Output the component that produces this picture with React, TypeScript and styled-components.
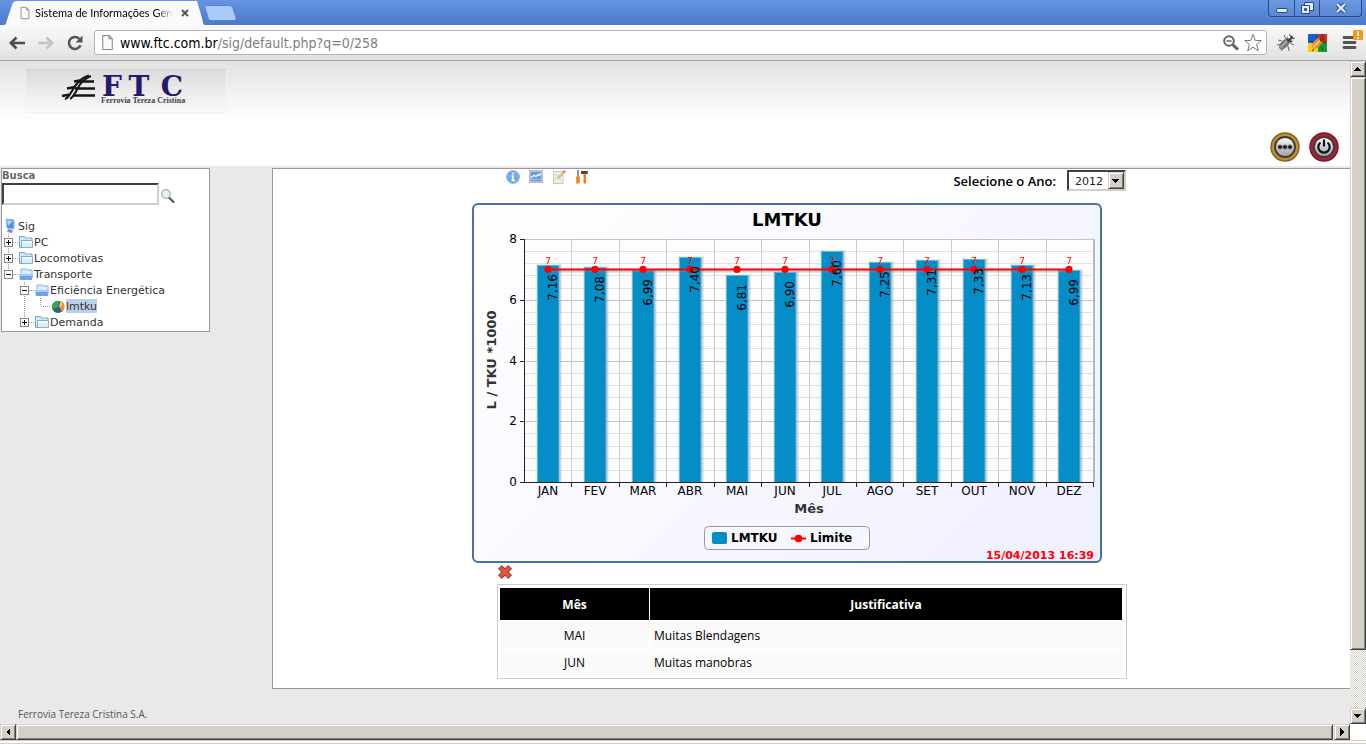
import React from "react";
import styled, { createGlobalStyle, css } from "styled-components";

const verdana = `Verdana, "DejaVu Sans", sans-serif`;
const tahoma = `Tahoma, "DejaVu Sans Condensed", sans-serif`;
const trebuchet = `"Trebuchet MS", "Open Sans", sans-serif`;

const GlobalStyle = createGlobalStyle`
  * { box-sizing: border-box; }
  body { margin: 0; background: #fff; font-family: ${verdana}; overflow: hidden; }
  button { padding: 0; border: 0; background: none; font: inherit; cursor: pointer; }
  svg { display: block; }
`;

/* ---------- browser window ---------- */

const Window = styled.div`
  display: flex;
  flex-direction: column;
  height: 100vh;
  min-width: 1100px;
`;

const TitleBar = styled.div`
  display: flex;
  flex: none;
  height: 25px;
  padding-left: 3px;
  background: linear-gradient(#6594e0, #4b7acc);
`;

const Tab = styled.div`
  display: flex;
  align-items: center;
  width: 179px;
  height: 24px;
  margin-top: 1px;
  padding: 0 8px 0 0;
  background: #fafafa;
  font: 11px/16px Lato, sans-serif;
  color: #000;
`;

const TabTitle = styled.span`
  flex: 1;
  margin: 0 8px 0 3px;
  overflow: hidden;
  white-space: nowrap;
  mask-image: linear-gradient(to right, #000 88%, transparent);
`;

const NewTab = styled.button`
  margin-top: 5px;
  height: 16px;
`;

const WindowButtons = styled.div`
  display: flex;
  height: 17px;
  margin: 0 4px 0 auto;
  border: 1px solid #264a8c;
  border-top: 0;
  border-radius: 0 0 4px 4px;
  background: linear-gradient(#6d9ae2, #5b87d4);
`;

const WindowButton = styled.button<{ $width: number }>`
  display: grid;
  place-items: center;
  width: ${(p) => p.$width}px;
  & + & { border-left: 1px solid #264a8c; }
`;

const Toolbar = styled.div`
  display: flex;
  flex: none;
  align-items: center;
  height: 36px;
  padding: 0 3px 0 8px;
  border-bottom: 1px solid #a5a5a5;
  background: linear-gradient(#fafafa, #e1e1e1);
`;

const ToolButton = styled.button<{ $gap?: number }>`
  flex: none;
  margin-right: ${(p) => p.$gap ?? 0}px;
`;

const AddressBar = styled.div`
  display: flex;
  flex: 1;
  align-items: center;
  height: 25px;
  margin-right: 9px;
  padding: 0 3px 0 4px;
  border: 1px solid #b4b4b4;
  border-radius: 3px;
  background: #fff;
`;

const Address = styled.div`
  flex: 1;
  margin-left: 4px;
  font: 14px/18px ${tahoma};
  color: #808080;
  b { color: #000; font-weight: 400; }
`;

const Body = styled.div`
  display: flex;
  flex: 1;
  min-height: 0;
`;

const bevel = css`
  border: 1px solid;
  border-color: #d4d0c8 #404040 #404040 #d4d0c8;
  box-shadow: inset 1px 1px #fff, inset -1px -1px #808080;
  background: #d4d0c8;
`;

const ScrollBar = styled.div<{ $across?: boolean }>`
  display: flex;
  flex: none;
  flex-direction: ${(p) => (p.$across ? "row" : "column")};
  ${(p) => (p.$across ? "height: 16px;" : "width: 16px;")}
  background: repeating-conic-gradient(#d4d0c8 0 25%, #fff 0 50%) 0 0 / 2px 2px;
`;

const ScrollArrow = styled.button`
  ${bevel}
  display: grid;
  flex: none;
  place-items: center;
  width: 16px;
  height: 16px;
`;

const Thumb = styled.div<{ $share: number }>`
  ${bevel}
  flex: ${(p) => p.$share};
`;

const Track = styled.div<{ $share: number }>`
  flex: ${(p) => p.$share};
`;

const Corner = styled.div`
  width: 16px;
  background: #fff;
`;

const BottomRow = styled.div`
  display: flex;
  flex: none;
  ${ScrollBar} { flex: 1; }
`;

const BottomEdge = styled.div`
  flex: none;
  height: 4px;
  border-top: 1px solid #d4d0c8;
  border-bottom: 1px solid #d4d0c8;
  background: #fff;
`;

/* ---------- site ---------- */

const Page = styled.div`
  flex: 1;
  min-width: 0;
  overflow: hidden;
  background: #e9e9e9;
`;

const Header = styled.header`
  display: flex;
  align-items: flex-end;
  justify-content: space-between;
  height: 105px;
  padding: 8px 11px 4px 25px;
  background: linear-gradient(#e3e2e0, #fff 60px);
`;

const LogoBox = styled.a`
  align-self: flex-start;
  width: 202px;
  height: 44px;
  border: 1px solid #f2f2f2;
  border-top-color: #cfcfcf;
  background: linear-gradient(#dcdcdc, #fafafa);
`;

const HeaderButtons = styled.div`
  display: flex;
  gap: 9px;
`;

const Columns = styled.div`
  display: flex;
  align-items: flex-start;
  padding-top: 2px;
`;

const Sidebar = styled.aside`
  flex: none;
  width: 209px;
  margin: 0 62px 0 1px;
  border: 1px solid #999;
  background: #fff;
`;

const SearchLabel = styled.label`
  display: block;
  font: bold 10px/14px ${verdana};
  color: #666;
`;

const SearchRow = styled.div`
  display: flex;
  align-items: center;
  gap: 1px;
  margin-bottom: 13px;
`;

const SearchInput = styled.input`
  width: 157px;
  height: 22px;
  border: 2px solid;
  border-color: #404040 #d4d0c8 #d4d0c8 #404040;
  background: #fff;
  outline: 0;
`;

const Tree = styled.ul`
  margin: 0;
  padding: 0 0 1px;
  list-style: none;
`;

const TreeRow = styled.li`
  display: flex;
  height: 16px;
  font: 11px/16px ${verdana};
`;

const TreeCell = styled.span`
  flex: none;
  width: 16px;
  height: 16px;
`;

const TreeLink = styled.a<{ $selected?: boolean }>`
  height: 14px;
  margin-top: 1px;
  line-height: 16px;
  color: #333;
  text-decoration: none;
  white-space: nowrap;
  ${(p) => p.$selected && "background: #bcd0ec;"}
`;

const Main = styled.main`
  flex: 1;
  min-width: 0;
  margin-right: -2px;
  padding-bottom: 9px;
  border: 1px solid #999;
  background: #fff;
`;

const Report = styled.div`
  width: 630px;
  margin: 0 auto;
`;

const ReportBar = styled.div`
  display: flex;
  align-items: flex-start;
  height: 34px;
  padding-left: 8px;
`;

const Tools = styled.div`
  display: flex;
  gap: 7px;
`;

const YearField = styled.div`
  display: flex;
  align-items: center;
  gap: 11px;
  margin: 1px 1px 0 auto;
  font: 600 13px/20px ${trebuchet};
  color: #000;
`;

const SelectBox = styled.span`
  display: flex;
  width: 59px;
  height: 21px;
  border: 2px solid;
  border-color: #404040 #d4d0c8 #d4d0c8 #404040;
  background: #fff;
`;

const Select = styled.select`
  flex: 1;
  min-width: 0;
  padding: 2px 0 0 6px;
  border: 0;
  background: #fff;
  color: #222;
  font: 11px/15px ${verdana};
  appearance: none;
  outline: 0;
`;

const SelectArrow = styled.span`
  ${bevel}
  display: grid;
  place-items: center;
  width: 16px;
`;

const ChartFrame = styled.figure`
  width: 630px;
  height: 360px;
  margin: 0 0 0 -25px;
  border: 2px solid #4572a7;
  border-radius: 6px;
  background: linear-gradient(135deg, #fff, #f0f0ff);
`;

const CloseRow = styled.div`
  height: 21px;
  padding: 1px 0 0 1px;
`;

const TableFrame = styled.div`
  padding: 2px 3px 2px 1px;
  border: 1px solid #ccc;
`;

const Table = styled.table`
  width: 100%;
  border-spacing: 1px;
  table-layout: fixed;
  font: 12px/20px ${trebuchet};
  color: #000;
`;

const HeadCell = styled.th<{ $width?: number }>`
  ${(p) => p.$width && `width: ${p.$width}px;`}
  height: 33px;
  padding: 1px 0 0;
  border-bottom: 1px solid #fff;
  background: #000;
  color: #fff;
`;

const Cell = styled.td<{ $center?: boolean }>`
  height: 26px;
  padding: 2px 4px 0;
  background: #fafafa;
  text-align: ${(p) => (p.$center ? "center" : "left")};
`;

const Footer = styled.footer`
  padding: 17px 18px 0;
  font: 10px/16px ${trebuchet};
  color: #555;
`;

/* ---------- icons ---------- */

const PageIcon = ({ size = 16 }: { size?: number }) => (
  <svg width={size} height={size} viewBox="0 0 16 16" fill="none" stroke="#8c8c8c">
    <path d="M3.500 1.500h6l3 3v10h-9z" fill="#fafafa" />
    <path d="M9.500 1.500v3h3" />
  </svg>
);

const ArrowGlyph = ({ d }: { d: string }) => (
  <svg width="8" height="8" viewBox="0 0 8 8" fill="#000" shapeRendering="crispEdges"><path d={d} /></svg>
);
const UP = "M0 6h7L3.500 2z";
const DOWN = "M0 2h7L3.500 6z";
const LEFT = "M6 0v8L2 4z";
const RIGHT = "M2 0v8l4-4z";

const BackIcon = ({ color, flip }: { color: string; flip?: boolean }) => (
  <svg width="18" height="16" viewBox="0 0 18 16" fill="none" stroke={color} strokeWidth="2.600">
    <path d={flip ? "M1 8h14M9.500 2.500L15.200 8l-5.700 5.500" : "M17 8H3M8.500 2.500L2.800 8l5.700 5.500"} />
  </svg>
);

const ReloadIcon = () => (
  <svg width="18" height="18" viewBox="0 0 18 18">
    <path d="M14.500 11.200A6 6 0 1 1 13.300 4.800" fill="none" stroke="#555" strokeWidth="2.600" />
    <path d="M16.500 1.500v7h-7z" fill="#555" />
  </svg>
);

const ZoomOutIcon = () => (
  <svg width="18" height="18" viewBox="0 0 18 18" fill="none" stroke="#666">
    <circle cx="7" cy="7" r="4.800" strokeWidth="2" />
    <path d="M4.500 7h5" strokeWidth="1.500" />
    <path d="M10.700 10.700l5.300 5" strokeWidth="3" />
  </svg>
);

const StarIcon = () => (
  <svg width="20" height="20" viewBox="0 0 20 20" fill="#fff" stroke="#777" strokeLinejoin="round">
    <path d="M10 1.500l2.300 6h6l-4.700 4 1.700 6.300L10 14.200l-5.300 3.600 1.700-6.300-4.700-4h6z" />
  </svg>
);

const BugIcon = () => (
  <svg width="20" height="20" viewBox="0 0 20 20">
    <path d="M6 8L2 7M7 11L1 12M9 14l-4 4M12 13l1 5M14 10l4 2M10 6L8 2M13 4l1-3M16 6l3-1" stroke="#666" fill="none" />
    <ellipse cx="8.500" cy="11" rx="6.800" ry="3.600" transform="rotate(-45 8.500 11)" fill="#777" />
    <path d="M4.500 14.500L12 7" stroke="#b5b5b5" strokeWidth="1.500" />
    <circle cx="14" cy="6" r="3.400" fill="#444" />
    <circle cx="12.800" cy="4" r="1.500" fill="#fff" />
    <circle cx="16.500" cy="7" r="1.300" fill="#ddd" />
  </svg>
);

const ColorBugIcon = () => (
  <svg width="20" height="20" viewBox="0 0 20 20">
    <path d="M0 1h10v9H0z" fill="#1560d8" />
    <path d="M10 1h9v9h-9z" fill="#d92b1f" />
    <path d="M0 10h10v9H0z" fill="#fbc916" />
    <path d="M10 10h9v9h-9z" fill="#159a3c" />
    <path d="M5 9L2 8M6 16l-2 2M13 14l2 3M15 9l3 1M10 6L8 3M14 4l1-3" stroke="#333" />
    <ellipse cx="9.500" cy="10" rx="7" ry="3.500" transform="rotate(-45 9.500 10)" fill="#f58a24" />
    <path d="M5 14.500L12.500 7" stroke="#ffd9a0" strokeWidth="1.300" />
    <circle cx="14" cy="6" r="2.600" fill="#7d3510" />
  </svg>
);

const MenuIcon = () => (
  <svg width="22" height="26" viewBox="0 0 22 26">
    <path d="M3 7.500h10M3 12.500h11M3 17.500h11" stroke="#555" strokeWidth="2.800" strokeLinecap="round" />
    <rect x="12" y="0" width="10" height="10" rx="1.500" fill="#f39a1d" />
    <path d="M17 1.500v4.500M17 7v2" stroke="#fff" strokeWidth="1.700" />
  </svg>
);

const Logo = () => (
  <svg width="200" height="42" viewBox="0 0 200 42">
    <g stroke="#161616" fill="none">
      <path d="M39 29C46 27 47 10 63 5.500" strokeWidth="2.200" />
      <path d="M44 29C51 25 51 11 65 6" strokeWidth="2" />
      <path d="M53 11.500h15M49 18.500h20M47 25.500h22" strokeWidth="2.400" />
      <path d="M36 26l8-1.500M41 18.500l8-1.500M48 11.500l6-1" strokeWidth="2.400" />
    </g>
    <g fill="#241a6b" fontFamily='"DejaVu Serif", serif' fontWeight="700" fontSize="28" textAnchor="middle">
      <text x="86" y="26">F</text>
      <text x="113" y="26">T</text>
      <text x="146" y="26">C</text>
    </g>
    <text x="75" y="33" fontFamily='"Liberation Serif", serif' fontSize="8" fontWeight="700" fill="#444">Ferrovia Tereza Cristina</text>
  </svg>
);

const RoundIcon = ({ ring, edge, children }: { ring: string; edge: string; children: React.ReactNode }) => (
  <svg width="30" height="30" viewBox="0 0 30 30">
    <defs>
      <linearGradient id={`metal-${edge.slice(1)}`} x1="0" y1="0" x2="0" y2="1">
        <stop offset="0" stopColor="#fff" />
        <stop offset="1" stopColor="#9c9c9c" />
      </linearGradient>
    </defs>
    <circle cx="15" cy="15" r="14" fill={ring} stroke={edge} strokeWidth="1.500" />
    <circle cx="15" cy="15" r="10" fill={`url(#metal-${edge.slice(1)})`} stroke="#3c3c3c" strokeWidth="1.800" />
    {children}
  </svg>
);

const SearchIcon = () => (
  <svg width="16" height="20" viewBox="0 0 16 20">
    <path d="M9 13.500l4.500 4.500" stroke="#555" strokeWidth="2.200" strokeLinecap="round" />
    <circle cx="6" cy="10" r="4.300" fill="#e2f1f1" stroke="#a4b3b3" strokeWidth="1.200" />
  </svg>
);

const ComputerIcon = () => (
  <svg width="16" height="16" viewBox="0 0 16 16">
    <path d="M4 1l8 1v9l-7-1z" fill="#4a8fe8" stroke="#9ab8ea" />
    <path d="M5 2l6 1-5 5z" fill="#9cdcf8" />
    <path d="M6 11l5 1-1 3-5-1z" fill="#8a88c4" />
  </svg>
);

const FolderIcon = ({ open }: { open?: boolean }) =>
  open ? (
    <svg width="16" height="16" viewBox="0 0 16 16">
      <path d="M3 3h5l1 1h5v5H3z" fill="#dceafb" stroke="#8bb0ea" />
      <path d="M1 8h14l-1 6H2z" fill="#6ea2f0" />
      <path d="M1 8h14v2H1z" fill="#a6c8fa" />
    </svg>
  ) : (
    <svg width="16" height="16" viewBox="0 0 16 16">
      <path d="M1.500 13.500v-11h5l1 1.500h6.500v9.500z" fill="#cfe6f5" stroke="#6fabcc" />
      <path d="M3.500 13.500v-7h11v7z" fill="#d9eefa" stroke="#78b4d4" />
      <path d="M4 7h10v2H4z" fill="#f4fbff" />
    </svg>
  );

const PieIcon = () => (
  <svg width="16" height="16" viewBox="0 0 16 16">
    <circle cx="8" cy="9" r="6" fill="#2f5f8f" />
    <path d="M8 9L2.500 11.500A6 6 0 0 1 9.500 3z" fill="#3ea648" />
    <path d="M9 9l2-6a6 6 0 0 1 1 10.500z" fill="#f0913a" />
    <path d="M9 9l2-6 1 4z" fill="#fcd9ae" />
  </svg>
);

const Guide = ({ down, sign }: { down?: boolean; sign?: "+" | "-" }) => (
  <svg width="16" height="16" viewBox="0 0 16 16" fill="none" shapeRendering="crispEdges">
    <path d={`M6.500 0v${down ? 16 : 8}M7 8.500h9`} stroke="#999" strokeDasharray="1 1" />
    {sign && (
      <>
        <rect x="2.500" y="4.500" width="8" height="8" fill="#fff" stroke="#848484" />
        <path d={sign === "+" ? "M4 8.500h5M6.500 6v5" : "M4 8.500h5"} stroke="#000" />
      </>
    )}
  </svg>
);

const Line = () => (
  <svg width="16" height="16" viewBox="0 0 16 16" shapeRendering="crispEdges">
    <path d="M6.500 0v16" stroke="#999" strokeDasharray="1 1" />
  </svg>
);

const InfoIcon = () => (
  <svg width="16" height="16" viewBox="0 0 16 16">
    <circle cx="8" cy="8" r="6.500" fill="#7ba8ea" stroke="#9bbcee" />
    <path d="M8 3.500v2M6.500 7H8v4.500M6.500 11.500h3.500" stroke="#fff" strokeWidth="1.600" fill="none" />
  </svg>
);

const GraphIcon = () => (
  <svg width="16" height="16" viewBox="0 0 16 16">
    <rect x="1" y="1" width="14" height="13" fill="#b4bfcf" />
    <rect x="3" y="3" width="10" height="9" fill="#6e9be0" />
    <path d="M3 8.500l3-2 2 1 2-2 1 1 2-2" stroke="#fff" fill="none" strokeWidth="1.200" />
    <path d="M3 10.500h10" stroke="#a5c2ee" />
  </svg>
);

const NoteIcon = () => (
  <svg width="16" height="16" viewBox="0 0 16 16">
    <path d="M2.500 2.500h9.500v12h-9.500z" fill="#f1f0e6" stroke="#cbc9b8" />
    <path d="M4 6h5M4 8h4M4 10h6" stroke="#d0d0d0" />
    <path d="M7.500 9L13 3" stroke="#e8b45e" strokeWidth="2" />
    <path d="M12.500 3.500l1.500-1.500" stroke="#d0605a" strokeWidth="2" />
  </svg>
);

const ToolsIcon = () => (
  <svg width="16" height="16" viewBox="0 0 16 16">
    <path d="M4 1v7" stroke="#777" strokeWidth="1.500" />
    <path d="M2.200 7.500h3.600v7H2.200z" fill="#f5841f" />
    <path d="M7 2h6.500l.5 3H7z" fill="#4c4038" />
    <path d="M9.500 4.500h2.500v10H9.500z" fill="#f07a2a" />
  </svg>
);

const CloseIcon = () => (
  <svg width="14" height="14" viewBox="0 0 14 14" strokeLinecap="square">
    <path d="M3.800 3.800l6.400 6.400M10.200 3.800l-6.400 6.400" stroke="#a83420" strokeWidth="5.400" />
    <path d="M3.800 3.800l6.400 6.400M10.200 3.800l-6.400 6.400" stroke="#e0583a" strokeWidth="3.600" />
  </svg>
);

/* ---------- chart ---------- */

const data = [
  ["JAN", 7.16], ["FEV", 7.08], ["MAR", 6.99], ["ABR", 7.4],
  ["MAI", 6.81], ["JUN", 6.9], ["JUL", 7.6], ["AGO", 7.25],
  ["SET", 7.31], ["OUT", 7.33], ["NOV", 7.13], ["DEZ", 6.99],
] as [string, number][];

const plot = { left: 51, right: 620, top: 34, bottom: 277 };
const stepX = (plot.right - plot.left) / data.length;
const yOf = (v: number) => plot.bottom - (v * (plot.bottom - plot.top)) / 8;
const xOf = (i: number) => Math.round(plot.left + stepX * (i + 0.5)) - 1;

const Chart = () => (
  <svg width="626" height="356" viewBox="0 0 626 356" fontFamily='Verdana, "DejaVu Sans", sans-serif' fontSize="12">
    <text x="313" y="21" textAnchor="middle" fontSize="18" fontWeight="700">LMTKU</text>
    <rect x={plot.left} y={plot.top} width={plot.right - plot.left} height={plot.bottom - plot.top} fill="#fdfdfd" />
    {Array.from({ length: 21 }, (_, i) => i * 0.4).map((v, i) => {
      const major = i % 5 === 0;
      const y = Math.round(yOf(v)) + 0.5;
      return <path key={i} d={`M${plot.left} ${y}H${plot.right}`} stroke={major ? "#c4c4c4" : "#e0e0e0"} />;
    })}
    {data.map(([m], i) => {
      const x = Math.round(plot.left + stepX * (i + 1)) - 0.5;
      return (
        <g key={m}>
          <path d={`M${x} ${plot.top}V${plot.bottom}`} stroke="#ccc" />
          <path d={`M${x} ${plot.bottom}v5`} stroke="#222" />
        </g>
      );
    })}
    <path d={`M${plot.right} ${plot.top}V${plot.bottom}`} stroke="#b8b8b8" strokeWidth="2" />
    {data.map(([m, v], i) => {
      const x = xOf(i);
      const y = Math.round(yOf(v));
      return (
        <g key={m}>
          <rect x={x - 12} y={y - 1} width="26" height={plot.bottom - y + 1} fill="#999" opacity="0.18" />
          <rect x={x + 10} y={y} width="3" height={plot.bottom - y} fill="#999" opacity="0.3" />
          <rect x={x - 11} y={y} width="22" height={plot.bottom - y} fill="#058dc7" />
          <path d={`M${x - 10.5} ${plot.bottom}V${y + 0.5}h21.500V${plot.bottom}`} stroke="#62b9df" fill="none" />
        </g>
      );
    })}
    <path d={`M${plot.left - 0.5} ${plot.top}V${plot.bottom + 0.5}H${plot.right}`} stroke="#222" fill="none" />
    {[0, 2, 4, 6, 8].map((v) => (
      <g key={v}>
        <path d={`M${plot.left - 5} ${Math.round(yOf(v)) + 0.5}h5`} stroke="#222" />
        <text x={plot.left - 8} y={Math.round(yOf(v)) + 4} textAnchor="end">{v}</text>
      </g>
    ))}
    <path d={`M${xOf(0)} ${yOf(7) + 2}H${xOf(11)}`} stroke="#888" strokeWidth="2" opacity="0.4" />
    <path d={`M${xOf(0)} ${yOf(7)}H${xOf(11)}`} stroke="#f00" strokeWidth="2" />
    {data.map(([m, v], i) => (
      <g key={m}>
        <circle cx={xOf(i)} cy={yOf(7)} r="3.600" fill="#f00" />
        <text x={xOf(i)} y={yOf(7) - 5} textAnchor="middle" fontSize="9" fill="#f00">7</text>
        <text transform={`translate(${xOf(i) + 9} ${Math.round(yOf(v)) + 9}) rotate(-90)`} textAnchor="end">{v.toFixed(2).replace(".", ",")}</text>
        <text x={xOf(i)} y="290" textAnchor="middle">{m}</text>
      </g>
    ))}
    <text transform="translate(22 155) rotate(-90)" textAnchor="middle" fontSize="13" fontWeight="700" fill="#333">L / TKU *1000</text>
    <text x="335" y="308" textAnchor="middle" fontSize="13" fontWeight="700" fill="#333">Mês</text>
    <rect x="230.500" y="321.500" width="165" height="23" rx="4" fill="#f7f7ff" stroke="#999" />
    <rect x="238" y="327" width="15" height="12" rx="2" fill="#058dc7" />
    <text x="257" y="337" fontWeight="700">LMTKU</text>
    <path d="M317 333.500h15" stroke="#f00" strokeWidth="2" />
    <circle cx="324.500" cy="333.500" r="3.800" fill="#f00" />
    <text x="336" y="337" fontWeight="700">Limite</text>
    <text x="620" y="354" textAnchor="end" fontSize="11" fontWeight="700" fill="#f00">15/04/2013 16:39</text>
  </svg>
);

/* ---------- app ---------- */

type Node = { name: string; cells: React.ReactNode[]; selected?: boolean };

const nodes: Node[] = [
  { name: "Sig", cells: [<ComputerIcon />] },
  { name: "PC", cells: [<Guide down sign="+" />, <FolderIcon />] },
  { name: "Locomotivas", cells: [<Guide down sign="+" />, <FolderIcon />] },
  { name: "Transporte", cells: [<Guide sign="-" />, <FolderIcon open />] },
  { name: "Eficiência Energética", cells: [null, <Guide down sign="-" />, <FolderIcon open />] },
  { name: "lmtku", cells: [null, <Line />, <Guide />, <PieIcon />], selected: true },
  { name: "Demanda", cells: [null, <Guide sign="+" />, <FolderIcon />] },
];

const justifications = [
  ["MAI", "Muitas Blendagens"],
  ["JUN", "Muitas manobras"],
];

export default function App() {
  return (
    <Window>
      <GlobalStyle />
      <TitleBar>
        <svg width="15" height="25" viewBox="0 0 15 25"><path d="M0 25c3 0 3-2 4-5l5-15c1-3 2-4 6-4v24z" fill="#fafafa" /></svg>
        <Tab>
          <PageIcon size={14} />
          <TabTitle>Sistema de Informações Gere</TabTitle>
          <button aria-label="Fechar guia">
            <svg width="8" height="8" viewBox="0 0 8 8" stroke="#555" strokeWidth="2"><path d="M1 1l6 6M7 1L1 7" /></svg>
          </button>
        </Tab>
        <svg width="8" height="25" viewBox="0 0 8 25"><path d="M0 1l5 17c1 4 1 7 3 7H0z" fill="#fafafa" /></svg>
        <NewTab aria-label="Nova guia">
          <svg width="32" height="16" viewBox="0 0 32 16">
            <path d="M1 .500h23c2 0 3 1 4 3l3 9c.5 2-.5 3-2 3H6c-2 0-2.500-1-3-3L0 3C0 1 0 .5 1 .5z" fill="#a9cbf8" stroke="#5682c8" />
          </svg>
        </NewTab>
        <WindowButtons>
          <WindowButton $width={25} aria-label="Minimizar">
            <svg width="12" height="12" viewBox="0 0 12 12"><rect x=".5" y="6.500" width="11" height="4" rx="1.500" fill="#e4edfb" stroke="#264a8c" /></svg>
          </WindowButton>
          <WindowButton $width={25} aria-label="Restaurar">
            <svg width="14" height="14" viewBox="0 0 14 14" fill="#e4edfb" stroke="#264a8c">
              <path d="M4.500 1.500h9v8h-9z" /><path d="M1.500 4.500h8v8h-8z" /><path d="M4.500 7.500h2v2h-2z" fill="#5b87d4" />
            </svg>
          </WindowButton>
          <WindowButton $width={42} aria-label="Fechar">
            <svg width="14" height="12" viewBox="0 0 14 12" fill="none">
              <path d="M3 2l8 8M11 2l-8 8" stroke="#264a8c" strokeWidth="4.400" />
              <path d="M3 2l8 8M11 2l-8 8" stroke="#e4edfb" strokeWidth="2.400" />
            </svg>
          </WindowButton>
        </WindowButtons>
      </TitleBar>

      <Toolbar>
        <ToolButton $gap={11} aria-label="Voltar"><BackIcon color="#4d4d4d" /></ToolButton>
        <ToolButton $gap={11} aria-label="Avançar"><BackIcon color="#c4c4c4" flip /></ToolButton>
        <ToolButton $gap={10} aria-label="Recarregar"><ReloadIcon /></ToolButton>
        <AddressBar>
          <PageIcon size={17} />
          <Address><b>www.ftc.com.br</b>/sig/default.php?q=0/258</Address>
          <ToolButton $gap={3} aria-label="Zoom"><ZoomOutIcon /></ToolButton>
          <ToolButton aria-label="Favorito"><StarIcon /></ToolButton>
        </AddressBar>
        <ToolButton $gap={12} aria-label="Firebug"><BugIcon /></ToolButton>
        <ToolButton $gap={13} aria-label="Depurador"><ColorBugIcon /></ToolButton>
        <ToolButton aria-label="Menu"><MenuIcon /></ToolButton>
      </Toolbar>

      <Body>
        <Page>
          <Header>
            <LogoBox href="#"><Logo /></LogoBox>
            <HeaderButtons>
              <button aria-label="Alterar senha">
                <RoundIcon ring="#c08c34" edge="#8c6420">
                  <path d="M10 12.500v5M7.800 13.800l4.400 2.500M12.200 13.800l-4.400 2.500M15 12.500v5M12.800 13.800l4.400 2.500M17.200 13.800l-4.400 2.500M20 12.500v5M17.800 13.800l4.400 2.500M22.200 13.800l-4.400 2.500" stroke="#111" strokeWidth="1.100" />
                </RoundIcon>
              </button>
              <button aria-label="Sair">
                <RoundIcon ring="#a32638" edge="#7c1826">
                  <path d="M11.500 10.500a5.700 5.700 0 1 0 7 0M15 7.500v7" stroke="#111" strokeWidth="2.200" fill="none" />
                </RoundIcon>
              </button>
            </HeaderButtons>
          </Header>

          <Columns>
            <Sidebar>
              <SearchLabel htmlFor="busca">Busca</SearchLabel>
              <SearchRow>
                <SearchInput id="busca" type="text" />
                <button aria-label="Buscar"><SearchIcon /></button>
              </SearchRow>
              <Tree>
                {nodes.map((n) => (
                  <TreeRow key={n.name}>
                    {n.cells.map((c, i) => <TreeCell key={i}>{c}</TreeCell>)}
                    <TreeLink href="#" $selected={n.selected}>{n.name}</TreeLink>
                  </TreeRow>
                ))}
              </Tree>
            </Sidebar>

            <Main>
              <Report>
                <ReportBar>
                  <Tools>
                    <button aria-label="Informações"><InfoIcon /></button>
                    <button aria-label="Gráfico"><GraphIcon /></button>
                    <button aria-label="Justificativa"><NoteIcon /></button>
                    <button aria-label="Ferramentas"><ToolsIcon /></button>
                  </Tools>
                  <YearField>
                    <label htmlFor="ano">Selecione o Ano:</label>
                    <SelectBox>
                      <Select id="ano" defaultValue="2012"><option>2012</option></Select>
                      <SelectArrow><ArrowGlyph d={DOWN} /></SelectArrow>
                    </SelectBox>
                  </YearField>
                </ReportBar>
                <ChartFrame><Chart /></ChartFrame>
                <CloseRow><button aria-label="Fechar justificativas"><CloseIcon /></button></CloseRow>
                <TableFrame>
                  <Table>
                    <thead>
                      <tr><HeadCell $width={149}>Mês</HeadCell><HeadCell>Justificativa</HeadCell></tr>
                    </thead>
                    <tbody>
                      {justifications.map(([m, t]) => (
                        <tr key={m}><Cell $center>{m}</Cell><Cell>{t}</Cell></tr>
                      ))}
                    </tbody>
                  </Table>
                </TableFrame>
              </Report>
            </Main>
          </Columns>
          <Footer>Ferrovia Tereza Cristina S.A.</Footer>
        </Page>
        <ScrollBar>
          <ScrollArrow aria-label="Rolar para cima"><ArrowGlyph d={UP} /></ScrollArrow>
          <Thumb $share={573} />
          <Track $share={58} />
          <ScrollArrow aria-label="Rolar para baixo"><ArrowGlyph d={DOWN} /></ScrollArrow>
        </ScrollBar>
      </Body>
      <BottomRow>
        <ScrollBar $across>
          <ScrollArrow aria-label="Rolar para a esquerda"><ArrowGlyph d={LEFT} /></ScrollArrow>
          <Thumb $share={1317} />
          <Track $share={1} />
          <ScrollArrow aria-label="Rolar para a direita"><ArrowGlyph d={RIGHT} /></ScrollArrow>
        </ScrollBar>
        <Corner />
      </BottomRow>
      <BottomEdge />
    </Window>
  );
}
